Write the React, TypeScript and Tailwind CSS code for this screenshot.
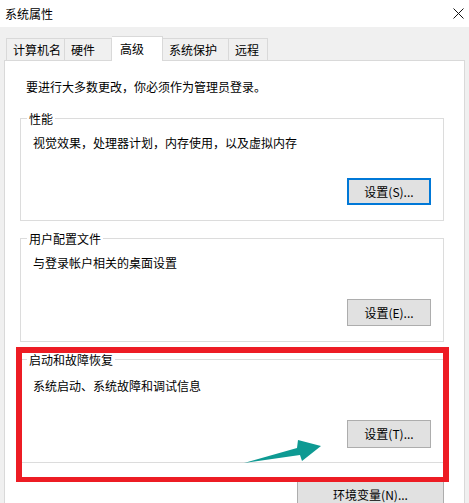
const tabs = [
  { label: "计算机名", w: "w-[59px] border-l", active: false },
  { label: "硬件", w: "w-[47px]", active: false },
  { label: "高级", w: "w-[51px]", active: true },
  { label: "系统保护", w: "w-[66px]", active: false },
  { label: "远程", w: "w-[39px]", active: false },
];

const SettingButton = ({ label, focused, className }: { label: string; focused?: boolean; className?: string }) => (
  <button
    className={
      "flex items-center justify-center bg-[#e1e1e1] text-[12px] leading-none text-black " +
      (focused ? "border-2 border-[#0078d7] " : "border border-[#adadad] ") +
      (className ?? "")
    }
  >
    {label}
  </button>
);

const Group = ({
  title,
  desc,
  button,
  focused,
  className,
  textPad,
  btnTop,
  btnH,
  bottomPad,
}: {
  title: string;
  desc: string;
  button: string;
  focused?: boolean;
  className?: string;
  textPad: string;
  btnTop: string;
  btnH: string;
  bottomPad: string;
}) => (
  <fieldset className={"border border-[#dcdcdc] p-0 " + (className ?? "")}>
    <legend className="ml-[6px] px-[2px] text-[12px] leading-[17px]">{title}</legend>
    <div className={"pl-[12px] pr-[12px] " + textPad + " " + bottomPad}>
      <div className="text-[12px] leading-[16px]">{desc}</div>
      <div className={"flex justify-end " + btnTop}>
        <SettingButton label={button} focused={focused} className={"w-[84px] " + btnH} />
      </div>
    </div>
  </fieldset>
);

export default function App() {
  return (
    <div className="relative w-[469px] h-[503px] overflow-hidden bg-[#f0f0f0] text-black font-['Noto_Sans_CJK_SC','Microsoft_YaHei',sans-serif]">
      {/* title bar */}
      <div className="flex h-[27px] items-center justify-between bg-white pl-[5px] pr-[5px]">
        <span className="text-[12px] leading-none">系统属性</span>
        <svg width="11" height="11" viewBox="0 0 11 11" className="mr-[0px]">
          <path d="M0.5 0.5 L10.5 10.5 M10.5 0.5 L0.5 10.5" stroke="#111" strokeWidth="1" />
        </svg>
      </div>

      {/* tabs */}
      <div className="flex h-[33px] items-end pl-[6px]">
        {tabs.map((t) =>
          t.active ? (
            <div
              key={t.label}
              className={"relative z-10 -mb-px flex h-[25px] items-center border-t border-r border-[#d9d9d9] bg-white pl-[8px] text-[12px] " + t.w}
            >
              {t.label}
            </div>
          ) : (
            <div
              key={t.label}
              className={"flex h-[22px] items-center border-t border-r border-[#d9d9d9] bg-[#f0f0f0] pl-[6px] text-[12px] " + t.w}
            >
              {t.label}
            </div>
          )
        )}
      </div>

      {/* panel */}
      <div className="ml-[4px] mr-[4px] h-[460px] border border-[#d9d9d9] bg-white pl-[15px] pr-[20px] pt-[18px]">
        <div className="ml-[6px] text-[12px] leading-[16px]">要进行大多数更改，你必须作为管理员登录。</div>

        <Group
          title="性能"
          desc="视觉效果，处理器计划，内存使用，以及虚拟内存"
          button="设置(S)..."
          focused
          className="mt-[15px]"
          textPad="pt-[8px]"
          btnTop="mt-[27px]"
          btnH="h-[27px]"
          bottomPad="pb-[15px]"
        />
        <Group
          title="用户配置文件"
          desc="与登录帐户相关的桌面设置"
          button="设置(E)..."
          className="mt-[9px]"
          textPad="pt-[8px]"
          btnTop="mt-[28px]"
          btnH="h-[27px]"
          bottomPad="pb-[15px]"
        />
        <Group
          title="启动和故障恢复"
          desc="系统启动、系统故障和调试信息"
          button="设置(T)..."
          className="mt-[9px]"
          textPad="pt-[10px]"
          btnTop="mt-[26px]"
          btnH="h-[28px]"
          bottomPad="pb-[14px]"
        />

        <div className="mt-[18px] flex justify-end">
          <SettingButton label="环境变量(N)..." className="h-[28px] w-[147px]" />
        </div>
      </div>

      {/* annotation: red box */}
      <div className="pointer-events-none absolute left-[16px] top-[347px] h-[135px] w-[433px] border-[6px] border-b-[5px] border-[#ed1c24]" />

      {/* annotation: arrow */}
      <svg className="pointer-events-none absolute left-0 top-0" width="469" height="503" viewBox="0 0 469 503">
        <polygon points="244,463 297,448 298,440 321,446 302,461 300,455" fill="#0e9a93" />
      </svg>
    </div>
  );
}
